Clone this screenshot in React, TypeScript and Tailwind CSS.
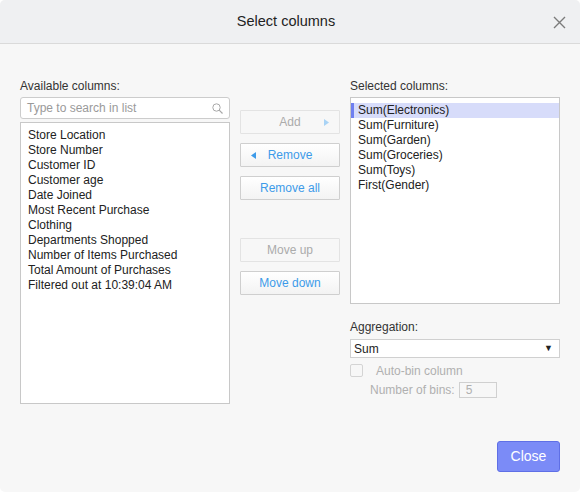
import React from "react";

const available = [
  "Store Location",
  "Store Number",
  "Customer ID",
  "Customer age",
  "Date Joined",
  "Most Recent Purchase",
  "Clothing",
  "Departments Shopped",
  "Number of Items Purchased",
  "Total Amount of Purchases",
  "Filtered out at 10:39:04 AM",
];

const selected = [
  "Sum(Electronics)",
  "Sum(Furniture)",
  "Sum(Garden)",
  "Sum(Groceries)",
  "Sum(Toys)",
  "First(Gender)",
];

function Btn({
  label,
  disabled,
  icon,
}: {
  label: string;
  disabled?: boolean;
  icon?: "left" | "right";
}) {
  return (
    <div
      className={
        "relative flex h-[24px] w-[100px] items-center justify-center rounded-[1px] border text-[12px] " +
        (disabled
          ? "border-[#e3e3e3] bg-[#f7f7f7] text-[#ababab]"
          : "border-[#cfcfcf] bg-gradient-to-b from-white to-[#f3f3f3] text-[#3d9be9]")
      }
    >
      {icon === "left" && (
        <svg className="absolute left-[10px] top-[8px]" width="5" height="7" viewBox="0 0 5 7">
          <path d="M5 0 L0 3.5 L5 7 Z" fill="#3d9be9" />
        </svg>
      )}
      <span>{label}</span>
      {icon === "right" && (
        <svg className="absolute right-[10px] top-[8px]" width="5" height="7" viewBox="0 0 5 7">
          <path d="M0 0 L5 3.5 L0 7 Z" fill="#a9d3f5" />
        </svg>
      )}
    </div>
  );
}

export default function App() {
  return (
    <div className="h-[492px] w-[580px] bg-white" style={{ fontFamily: '"Liberation Sans", Arial, sans-serif' }}>
      <div className="flex h-[492px] w-[580px] flex-col overflow-hidden rounded-[5px] bg-[#f7f7f7]">
        <div className="relative flex h-[44px] shrink-0 items-center justify-center border-b border-[#dadada] bg-[#eff0f2] pr-[8px]">
          <span className="text-[14.5px] text-[#222]">Select columns</span>
          <svg className="absolute left-[553px] top-[16px]" width="13" height="13" viewBox="0 0 13 13">
            <path d="M1 1 L12 12 M12 1 L1 12" stroke="#7b7b7b" strokeWidth="1.4" />
          </svg>
        </div>
        <div className="flex flex-1 flex-col px-[20px] pt-[35px]">
          <div className="flex gap-[10px]">
            {/* left */}
            <div className="flex w-[210px] flex-col">
              <div className="h-[15px] text-[12px] leading-[15px] text-[#333]">Available columns:</div>
              <div className="relative mt-[3px] flex h-[22px] items-center rounded-[3px] border border-[#cccccc] bg-white pl-[6px] text-[12px] text-[#9a9a9a]">
                Type to search in list
                <svg className="absolute right-[6px] top-[5px]" width="11" height="11" viewBox="0 0 11 11">
                  <circle cx="4.5" cy="4.5" r="3.7" stroke="#a8a8a8" strokeWidth="1" fill="none" />
                  <path d="M7.2 7.2 L10.5 10.5" stroke="#a8a8a8" strokeWidth="1.2" />
                </svg>
              </div>
              <div className="mt-[3px] h-[282px] border border-[#c8c8c8] bg-white pl-[7px] pt-[5px]">
                {available.map((a) => (
                  <div key={a} className="h-[15px] text-[12px] leading-[15px] text-[#222]">
                    {a}
                  </div>
                ))}
              </div>
            </div>
            {/* middle */}
            <div className="flex w-[100px] flex-col pt-[31px]">
              <div className="flex flex-col gap-[9px]">
                <Btn label="Add" disabled icon="right" />
                <Btn label="Remove" icon="left" />
                <Btn label="Remove all" />
              </div>
              <div className="mt-[38px] flex flex-col gap-[9px]">
                <Btn label="Move up" disabled />
                <Btn label="Move down" />
              </div>
            </div>
            {/* right */}
            <div className="flex w-[210px] flex-col">
              <div className="h-[15px] text-[12px] leading-[15px] text-[#333]">Selected columns:</div>
              <div className="mt-[3px] h-[207px] border border-[#c8c8c8] bg-white pt-[5px]">
                {selected.map((s, i) => (
                  <div
                    key={s}
                    className={
                      "flex h-[15px] items-center text-[12px] leading-[15px] text-[#222] " +
                      (i === 0 ? "bg-[#d7dcfa]" : "")
                    }
                  >
                    <div className={"h-[15px] w-[3px] " + (i === 0 ? "bg-[#6f7ff0]" : "")} />
                    <span className="pl-[4px]">{s}</span>
                  </div>
                ))}
              </div>
              <div className="mt-[16px] h-[15px] text-[12px] leading-[15px] text-[#333]">Aggregation:</div>
              <div className="mt-[4px] flex h-[19px] items-center justify-between border border-[#d0d0d0] bg-white pl-[3px] pr-[6px] text-[12px] text-[#222]">
                <span>Sum</span>
                <span className="text-[9px]">▼</span>
              </div>
              <div className="mt-[6px] flex h-[13px] items-center">
                <div className="h-[13px] w-[13px] rounded-[2px] border border-[#d4d4d4] bg-[#f7f7f7]" />
                <span className="ml-[13px] text-[12px] text-[#b0b0b0]">Auto-bin column</span>
              </div>
              <div className="mt-[5px] flex h-[16px] items-center pl-[20px]">
                <span className="text-[12px] text-[#b0b0b0]">Number of bins:</span>
                <div className="ml-[4px] flex h-[16px] w-[38px] items-center border border-[#d0d0d0] pl-[6px] text-[12px] text-[#b0b0b0]">
                  5
                </div>
              </div>
            </div>
          </div>
          <div className="mt-[37px] flex justify-end">
            <div className="flex h-[31px] w-[63px] items-center justify-center rounded-[3px] border border-[#5f6fe6] bg-[#7b8bf7] text-[14px] text-white">
              Close
            </div>
          </div>
        </div>
      </div>
    </div>
  );
}
